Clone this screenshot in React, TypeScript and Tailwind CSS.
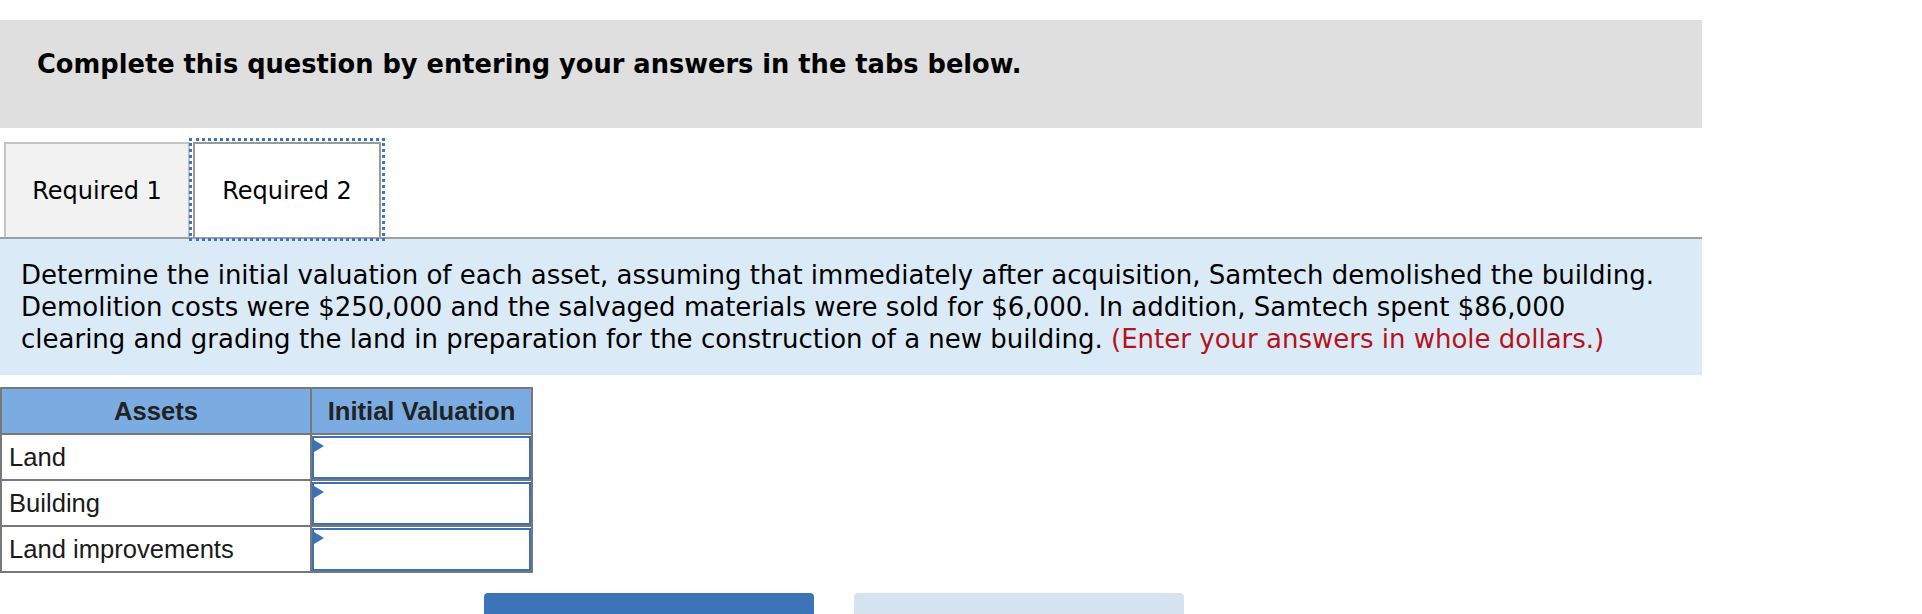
import React from "react";

const verdana = "font-['Verdana','DejaVu_Sans',sans-serif]";
const arial = "font-['Liberation_Sans',Arial,sans-serif]";

interface AssetRow {
  label: string;
}

const rows: AssetRow[] = [{ label: "Land" }, { label: "Building" }, { label: "Land improvements" }];

function AnswerInput() {
  return (
    <div className="relative h-[43px] w-full border-2 border-[#3a73b5] bg-white">
      <span className="absolute left-0 top-[2px] h-0 w-0 border-y-[6px] border-l-[10px] border-y-transparent border-l-[#3a73b5]" />
      <input type="text" className="h-full w-full bg-transparent px-2 outline-none" aria-label="Initial valuation" />
    </div>
  );
}

export default function App() {
  return (
    <div className="min-h-[614px] w-full bg-white pt-[20px] text-black">
      <div className="w-[1702px]">
        <div className={`h-[108px] bg-[#dfdfdf] pl-[37px] pt-[28px] ${verdana}`}>
          <p className="text-[25.7px] font-bold leading-[32px]">
            Complete this question by entering your answers in the tabs below.
          </p>
        </div>

        <div className={`mt-[14px] flex items-end border-b-2 border-[#a0a0a0] pl-[4px] ${verdana}`}>
          <button
            type="button"
            className="flex h-[95px] w-[186px] items-center justify-center border-x-2 border-t-2 border-[#c4c4c4] bg-[#f2f2f2] text-[24px]"
          >
            Required 1
          </button>
          <div className="ml-[3px] h-[95px] w-[190px]">
            <button
              type="button"
              className="flex h-[95px] w-[188px] items-center justify-center border-x-2 border-t-2 border-[#9a9a9a] bg-white text-[24px] outline-[3px] outline-offset-[1px] outline-dotted outline-[#3a78c3]"
            >
              Required 2
            </button>
          </div>
        </div>

        <div className={`bg-[#dbeaf7] px-[21px] pb-[20px] pt-[20px] text-[26px] leading-[32px] ${verdana}`}>
          <p className="whitespace-nowrap">
            Determine the initial valuation of each asset, assuming that immediately after acquisition, Samtech demolished the building.
            <br />
            Demolition costs were $250,000 and the salvaged materials were sold for $6,000. In addition, Samtech spent $86,000
            <br />
            clearing and grading the land in preparation for the construction of a new building.{" "}
            <span className="text-[#b5121b]">(Enter your answers in whole dollars.)</span>
          </p>
        </div>
      </div>

      <table className={`mt-[12px] w-[533px] border-collapse text-[25.6px] ${arial}`}>
        <thead>
          <tr className="h-[46px] bg-[#7aace2]">
            <th className="w-[310px] border-2 border-[#787878] text-center font-bold text-[#222]">Assets</th>
            <th className="border-2 border-[#787878] text-center font-bold text-[#222]">Initial Valuation</th>
          </tr>
        </thead>
        <tbody>
          {rows.map((row) => (
            <tr key={row.label} className="h-[46px]">
              <td className="border-2 border-[#787878] pl-[7px] text-[#1a1a1a]">{row.label}</td>
              <td className="border-2 border-[#787878] p-0">
                <AnswerInput />
              </td>
            </tr>
          ))}
        </tbody>
      </table>

      <div className="mt-[20px] flex gap-[40px] pl-[484px]">
        <button type="button" className="h-[40px] w-[330px] rounded-t-[4px] bg-[#3b75b7]" aria-label="Previous" />
        <button type="button" className="h-[40px] w-[330px] rounded-t-[4px] bg-[#d7e3f1]" aria-label="Next" />
      </div>
    </div>
  );
}
